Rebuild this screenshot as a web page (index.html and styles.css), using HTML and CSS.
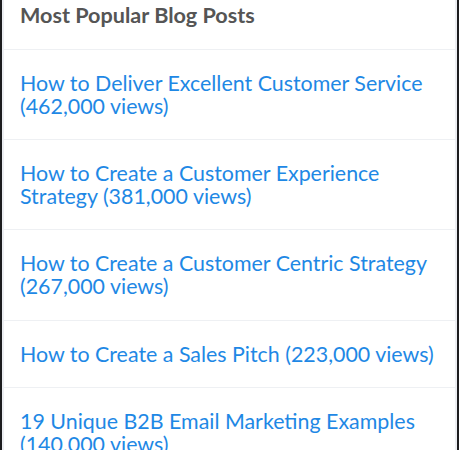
FILE: index.html
```html
<!DOCTYPE html>
<html lang="en">
<head>
    <meta charset="UTF-8">
    <meta name="viewport" content="width=device-width, initial-scale=1.0">
    <title>Most Popular Blog Posts</title>
    <link rel="stylesheet" href="styles.css">
</head>
<body>
    <div class="frame">
        <div class="popular-posts">
            <h2>Most Popular Blog Posts</h2>
            <ul class="post-list">
                <li><a href="#">How to Deliver Excellent Customer Service (462,000 views)</a></li>
                <li><a href="#">How to Create a Customer Experience Strategy (381,000 views)</a></li>
                <li><a href="#">How to Create a Customer Centric Strategy (267,000 views)</a></li>
                <li><a href="#">How to Create a Sales Pitch (223,000 views)</a></li>
                <li><a href="#">19 Unique B2B Email Marketing Examples (140,000 views)</a></li>
            </ul>
        </div>
    </div>
</body>
</html>
```
FILE: styles.css
```css
:root {
    --frame-color: #1c1c1e;
    --edge-color: #eceef2;
    --divider-color: #eef0f3;
    --heading-color: #555555;
    --link-color: #1e88e5;
    --white: #ffffff;
}

body {
    font-family: 'Lato', 'Open Sans', Arial, sans-serif;
    margin: 0;
    padding: 0;
    background-color: var(--frame-color);
    height: 450px;
    overflow: hidden;
}

.frame {
    height: 100%;
    border-left: 2px solid var(--frame-color);
    border-right: 2px solid var(--frame-color);
}

.popular-posts {
    height: 100%;
    overflow: hidden;
    background-color: var(--white);
    border-left: 2px solid var(--edge-color);
    border-right: 2px solid var(--edge-color);
}

h2 {
    margin: 0;
    padding: 4px 16px 22px;
    font-size: 21.6px;
    line-height: 23px;
    font-weight: 700;
    color: var(--heading-color);
    border-bottom: 1px solid var(--divider-color);
}

.post-list {
    list-style: none;
    margin: 0;
    padding: 0;
}

.post-list li {
    padding: 22px 16px 21px;
    border-bottom: 1px solid var(--divider-color);
    font-size: 21.4px;
    line-height: 23px;
}

.post-list li:nth-child(3) {
    padding-bottom: 22px;
}

.post-list a {
    color: var(--link-color);
    text-decoration: none;
}
```
